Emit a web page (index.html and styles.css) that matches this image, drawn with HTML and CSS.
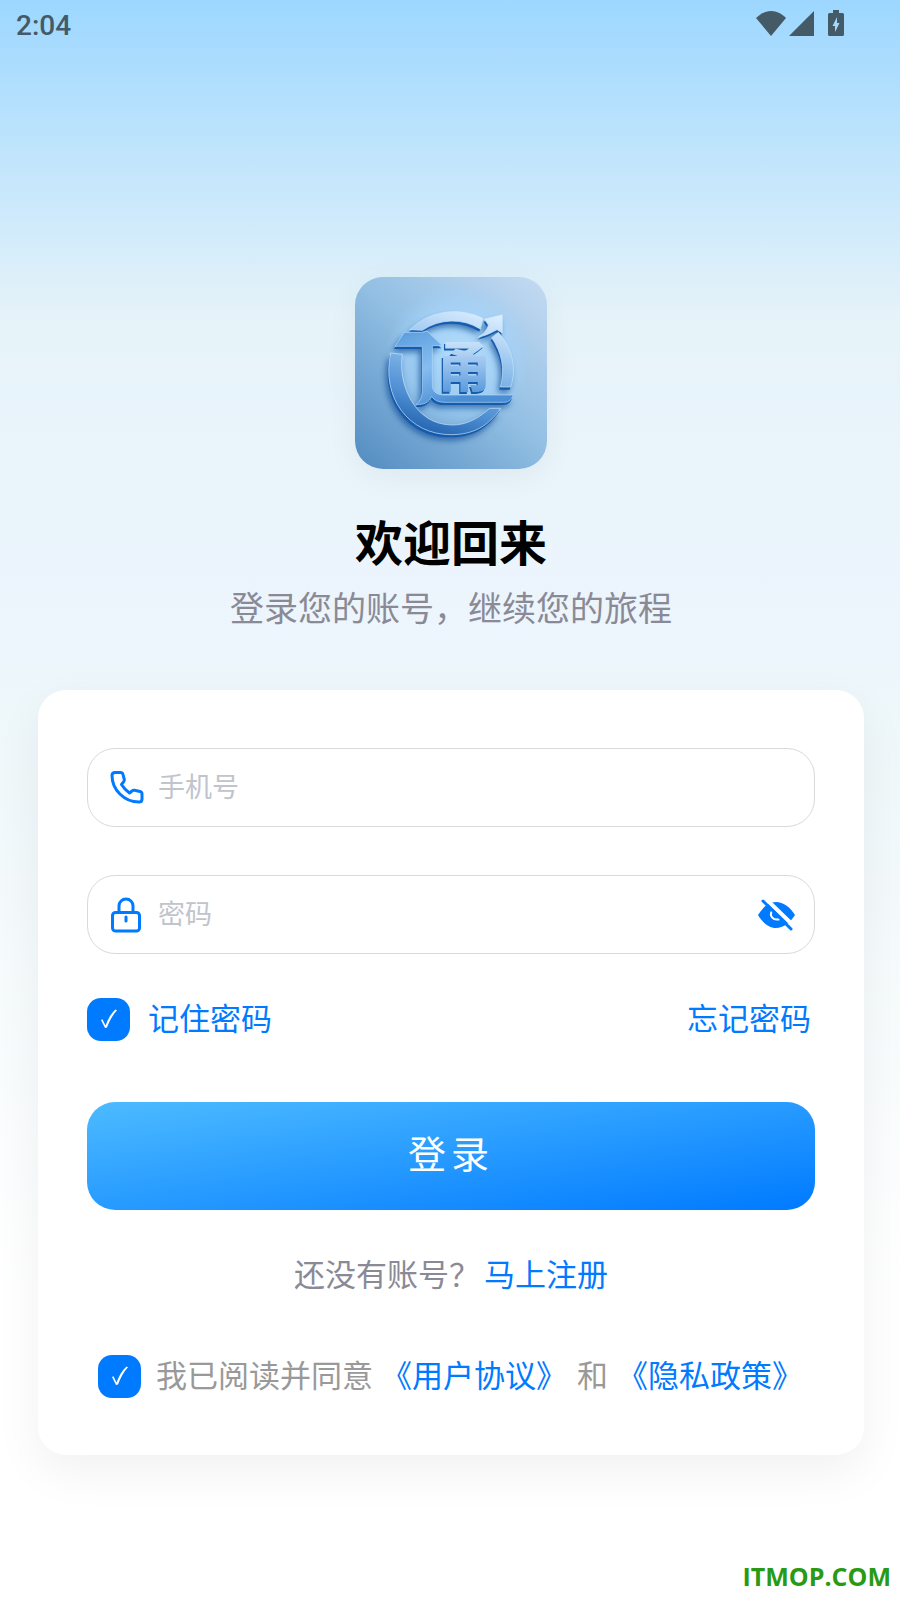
FILE: index.html
```html
<!DOCTYPE html>
<html lang="zh-CN">
<head>
<meta charset="utf-8">
<meta name="viewport" content="width=device-width, initial-scale=1">
<title>登录</title>
<link rel="stylesheet" href="styles.css">
</head>
<body>
<header class="status">
  <time class="clock">2:04</time>
  <div class="status-icons">
    <svg class="wifi" width="30" height="25" viewBox="0 0 30 25"><path d="M15 25L0 7C4 3 9 0 15 0s11 3 15 7z"/></svg>
    <svg class="signal" width="25" height="25" viewBox="0 0 25 25"><path d="M25 0v25H0z"/></svg>
    <svg class="battery" width="16" height="26" viewBox="0 0 16 26"><path fill-rule="evenodd" d="M5 0h6v3h3.500a1.500 1.500 0 0 1 1.500 1.500v20a1.500 1.500 0 0 1-1.500 1.500h-13A1.500 1.500 0 0 1 0 24.500v-20A1.500 1.500 0 0 1 1.500 3H5zM9 7l-4.500 9H7v6l4.500-9H9z"/></svg>
  </div>
</header>

<main class="page">
  <svg class="logo" viewBox="30 30 576 576" role="img" aria-label="通">
    <defs>
      <linearGradient id="back" x1="1" y1="0" x2="0.1" y2="1">
        <stop offset="0" stop-color="#c5dbf3"/><stop offset="0.5" stop-color="#92bfe3"/><stop offset="1" stop-color="#5890c4"/>
      </linearGradient>
      <radialGradient id="glow" gradientUnits="userSpaceOnUse" cx="340" cy="270" r="220">
        <stop offset="0" stop-color="#b4e0ff" stop-opacity="0.9"/><stop offset="0.7" stop-color="#a6d6fc" stop-opacity="0.6"/><stop offset="1" stop-color="#9fd2fa" stop-opacity="0"/>
      </radialGradient>
      <linearGradient id="face" gradientUnits="userSpaceOnUse" x1="370" y1="120" x2="250" y2="500">
        <stop offset="0" stop-color="#dceeff"/><stop offset="0.4" stop-color="#8bbdec"/><stop offset="0.75" stop-color="#4f8fd3"/><stop offset="1" stop-color="#2464b0"/>
      </linearGradient>
      <linearGradient id="glyph" gradientUnits="userSpaceOnUse" x1="350" y1="215" x2="350" y2="375">
        <stop offset="0" stop-color="#cfe6fc"/><stop offset="1" stop-color="#5c9adc"/>
      </linearGradient>
      <linearGradient id="radical" gradientUnits="userSpaceOnUse" x1="200" y1="190" x2="300" y2="410">
        <stop offset="0" stop-color="#5f9fdf"/><stop offset="0.5" stop-color="#86bdf0"/><stop offset="1" stop-color="#4c8ed4"/>
      </linearGradient>
      <filter id="soft" x="-20%" y="-20%" width="150%" height="150%"><feGaussianBlur stdDeviation="10"/></filter>
      <g id="ring">
        <path d="M194 188A192 192 0 0 1 414 154L406 186A160 160 0 0 0 232 190Z"/>
        <path d="M137 258L172 262C158 350 208 474 322 474C368 474 402 452 434 424H467C430 478 384 503 318 503C190 503 108 390 137 258Z"/>
        <path d="M440 212L460 196C502 244 516 304 497 360H466C480 305 472 260 440 212Z"/>
        <path d="M400 210C416 200 426 190 430 174L418 156L472 143V198L456 188C440 196 424 206 400 210Z"/>
      </g>
      <path id="walk" d="M150 238L178 196H230L246 192L292 236H262V358C264 376 276 384 300 384H505C500 398 492 406 476 406H300C280 406 268 400 260 388C252 406 238 414 214 412C228 398 232 388 232 366V238Z"/>
    </defs>
    <rect x="30" y="30" width="576" height="576" fill="url(#back)"/>
    <circle cx="340" cy="270" r="220" fill="url(#glow)"/>
    <g transform="translate(-8 16)" fill="#0b4a94" opacity="0.75" filter="url(#soft)"><use href="#ring"/><use href="#walk"/></g>
    <g transform="translate(-3 8)" fill="#145cae"><use href="#ring"/><use href="#walk"/></g>
    <g fill="url(#face)" stroke="#cce7ff" stroke-width="2"><use href="#ring"/></g>
    <use href="#walk" fill="url(#radical)" stroke="#b3dcff" stroke-width="2"/>
    <g class="logo-text" aria-hidden="true">
      <text x="273" y="366" fill="#145cae">甬</text>
      <text x="277" y="360" fill="url(#glyph)">甬</text>
    </g>
  </svg>

  <h1 class="title">欢迎回来</h1>
  <p class="subtitle">登录您的账号，继续您的旅程</p>

  <form class="card">
    <div class="field">
      <svg width="34" height="34" viewBox="0 0 34 34" class="line-icon"><path d="M5 1.500h5.500q2 0 2.500 2l1.300 5q.3 1.500-.8 2.500l-2 2.500q3 5 8 8.500l2.500-2q1-1 2.500-.7l5.500 1.200q2 .5 2 2.500v5q0 3-3 3C14 31 2 18.500 2 4.500q0-3 3-3z"/></svg>
      <input type="tel" placeholder="手机号" aria-label="手机号">
    </div>
    <div class="field">
      <svg width="34" height="36" viewBox="0 0 34 36" class="line-icon"><rect x="2.500" y="15.500" width="27" height="18.500" rx="3"/><path d="M9 15V9a7 7 0 0 1 14 0v6M16 20v4"/></svg>
      <input type="password" placeholder="密码" aria-label="密码">
      <button type="button" class="eye" aria-label="显示密码">
        <svg width="37" height="32" viewBox="0 0 37 32"><path fill="#007aff" d="M0 16C5 8 11 3 18 3s14 5 19 13c-5 8-12 13-19 13S5 24 0 16z"/><path fill="none" stroke="#fff" stroke-width="2" d="M14 12c-3 5 1 10 8 8"/><path stroke="#fff" stroke-width="4" d="M9 1l27 26"/><path stroke="#007aff" stroke-width="3" stroke-linecap="round" d="M5 2l28 28"/></svg>
      </button>
    </div>
    <div class="options">
      <label class="remember"><input type="checkbox" class="check" checked><span class="text">记住密码</span></label>
      <a class="text" href="#forgot">忘记密码</a>
    </div>
    <button type="submit" class="submit">登录</button>
    <p class="register">还没有账号？<a href="#register">马上注册</a></p>
    <div class="agree">
      <input type="checkbox" class="check" id="agree" checked>
      <p class="terms text"><label for="agree">我已阅读并同意</label><a href="#terms">《用户协议》</a><span>和</span><a href="#privacy">《隐私政策》</a></p>
    </div>
  </form>
</main>
<footer class="mark">ITMOP.COM</footer>
</body>
</html>
```
FILE: styles.css
```css
* { box-sizing: border-box; }

body {
  margin: 0;
  min-height: 100vh;
  display: flex;
  flex-direction: column;
  font-family: "Noto Sans CJK SC", sans-serif;
  font-size: 31px;
  line-height: 44px;
  background: linear-gradient(180deg, #9dd7ff 0, #e6f3f9 20%, #edf5fd 40%, #eef7fa 44%, #ffffff 80%);
}

h1, p { margin: 0; font-weight: 400; }
a { color: #007aff; text-decoration: none; }

.status {
  display: flex;
  justify-content: space-between;
  align-items: center;
  height: 50px;
  padding: 0 56px 0 16px;
  color: #455a67;
}
.clock { padding-top: 2px; font: 500 28px/32px Roboto, sans-serif; }
.status-icons { display: flex; align-items: center; gap: 3px; fill: #455a67; padding-bottom: 4px; }
.battery { margin-left: 11px; }

.page {
  flex: 1;
  display: flex;
  flex-direction: column;
  align-items: center;
  padding: 227px 36px 0 38px;
}
.logo {
  width: 192px;
  height: 192px;
  border-radius: 28px;
  box-shadow: 0 8px 32px rgba(0, 0, 0, 0.05);
}
.logo-text { font: 900 162px "Noto Sans CJK SC", sans-serif; }
.title { margin-top: 37px; font-size: 48px; line-height: 68px; font-weight: 700; color: #000; }
.subtitle { margin-top: 9px; font-size: 34px; line-height: 48px; color: #8a8a96; }

.card {
  align-self: stretch;
  margin-top: 59px;
  padding: 58px 49px 55px;
  display: flex;
  flex-direction: column;
  background: #fff;
  border-radius: 28px;
  box-shadow: 0 16px 48px rgba(0, 0, 0, 0.06);
}
.field {
  display: flex;
  align-items: center;
  height: 79px;
  padding: 0 19px 0 22px;
  border: 1px solid #d9d9dc;
  border-radius: 28px;
}
.field + .field { margin-top: 48px; }
.field input {
  flex: 1;
  min-width: 0;
  height: 48px;
  margin-left: 14px;
  padding: 0 0 4px;
  border: 0;
  outline: 0;
  background: none;
  font: inherit;
  font-size: 27px;
}
.field input::placeholder { color: #c0c4cc; opacity: 1; }
.line-icon { fill: none; stroke: #007aff; stroke-width: 3; stroke-linecap: round; stroke-linejoin: round; }
.eye { display: flex; padding: 0; border: 0; background: none; }

.text { padding-bottom: 4px; }
.options {
  display: flex;
  justify-content: space-between;
  align-items: center;
  margin-top: 41px;
  padding-right: 4px;
}
.remember { display: flex; align-items: center; gap: 18px; color: #007aff; }
.check {
  appearance: none;
  flex: none;
  width: 43px;
  height: 43px;
  margin: 0;
  border-radius: 14px;
  background: #007aff;
}
.check:checked {
  background: #007aff url("data:image/svg+xml,%3Csvg xmlns='http://www.w3.org/2000/svg' width='18' height='20' viewBox='0 0 18 20'%3E%3Cpath d='M1 11l1.500-.8 3 6.300C8 10 11 4.500 15.500.5l1.500.8C12.500 6 9.500 12 7 18.500l-2 .5z' fill='white'/%3E%3C/svg%3E") center no-repeat;
}

.submit {
  height: 108px;
  margin-top: 59px;
  padding: 0 0 8px;
  border: 0;
  border-radius: 28px;
  background: linear-gradient(to bottom right, #4dbbff, #007aff);
  color: #fff;
  font: inherit;
  font-size: 38px;
  letter-spacing: 5px;
}
.register { margin-top: 41px; text-align: center; color: #8a8a96; }
.register a { margin-left: 4px; }
.agree {
  display: flex;
  align-items: center;
  gap: 15px;
  margin-top: 57px;
  padding-left: 11px;
  color: #999;
}
.terms { display: flex; flex-wrap: wrap; column-gap: 8px; }
.terms span { padding: 0 1px 0 2px; }
.mark {
  padding: 0 9px 6px;
  text-align: right;
  font: 700 25px/36px "Open Sans", sans-serif;
  color: #2a9a15;
}
```
